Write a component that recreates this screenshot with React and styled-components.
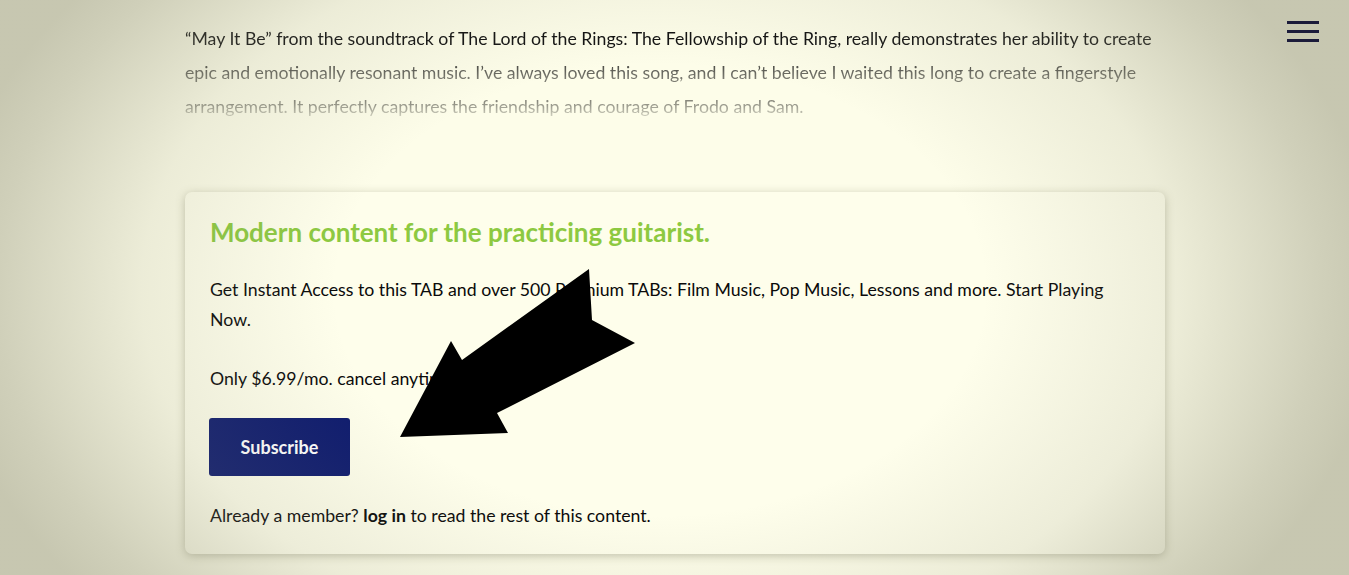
import React from "react";
import styled, { createGlobalStyle } from "styled-components";

const GlobalStyle = createGlobalStyle`
  html, body {
    margin: 0;
    padding: 0;
    background: #fdfde9;
    font-family: Lato, "Open Sans", sans-serif;
    color: #111;
  }
`;

const Page = styled.div`
  position: relative;
  width: 1349px;
  height: 575px;
  overflow: hidden;
  background: #fdfde9;
`;

// photo-style vignette laid over the whole page
const Vignette = styled.div`
  position: absolute;
  inset: 0;
  pointer-events: none;
  background: radial-gradient(
    ellipse 720px 500px at 660px 290px,
    rgba(140, 140, 115, 0) 45%,
    rgba(140, 140, 115, 0.15) 72%,
    rgba(140, 140, 115, 0.4) 92%,
    rgba(140, 140, 115, 0.48) 100%
  );
`;

const Column = styled.main`
  width: 980px;
  margin: 0 auto 0 185px;
  padding-top: 22px;
`;

const Teaser = styled.p`
  margin: 0;
  font-size: 17.7px;
  line-height: 34px;
  background: linear-gradient(
    180deg,
    #0c0c0c 0px,
    #151515 28px,
    #7a7a70 56px,
    #8a8a7e 80px,
    #cdcdbc 94px,
    #d6d6c4 115px
  );
  -webkit-background-clip: text;
  background-clip: text;
  color: transparent;
`;

const Card = styled.section`
  position: relative;
  margin-top: 68px;
  background: #fefeeb;
  border-radius: 7px;
  box-shadow: 0 2px 10px rgba(90, 90, 60, 0.35);
  padding: 25px 25px 23px;
`;

const Heading = styled.h2`
  margin: 0;
  font-size: 26px;
  line-height: 31px;
  font-weight: 700;
  color: #8dc941;
`;

const Text = styled.p`
  margin: ${(p) => p.$top || 0}px 0 0;
  font-size: 17.7px;
  line-height: 30px;
  color: #0a0a0a;
`;

const Button = styled.button`
  display: block;
  margin: 24px 0 0 -1px;
  width: 141px;
  height: 58px;
  border: none;
  border-radius: 3px;
  background: #0e1b6e;
  color: #fff;
  font-family: Lato, sans-serif;
  font-size: 18px;
  font-weight: 700;
  cursor: pointer;
`;

const Strong = styled.b`
  font-weight: 700;
`;

const Arrow = styled.svg`
  position: absolute;
  left: 0;
  top: 0;
  pointer-events: none;
`;

const Menu = styled.button`
  position: absolute;
  top: 21px;
  right: 30px;
  display: flex;
  flex-direction: column;
  gap: 6px;
  padding: 0;
  border: none;
  background: none;
`;

const Bar = styled.span`
  display: block;
  width: 32px;
  height: 3px;
  background: #1b1b3a;
`;

export default function App() {
  return (
    <Page>
      <GlobalStyle />
      <Column>
        <Teaser>
          “May It Be” from the soundtrack of The Lord of the Rings: The Fellowship of the Ring, really
          demonstrates her ability to create epic and emotionally resonant music. I’ve always loved
          this song, and I can’t believe I waited this long to create a fingerstyle arrangement. It
          perfectly captures the friendship and courage of Frodo and Sam.
        </Teaser>
        <Card>
          <Heading>Modern content for the practicing guitarist.</Heading>
          <Text $top={27}>
            Get Instant Access to this TAB and over 500 Premium TABs: Film Music, Pop Music, Lessons
            and more. Start Playing Now.
          </Text>
          <Text $top={29}>Only $6.99/mo. cancel anytime.</Text>
          <Button>Subscribe</Button>
          <Text $top={25}>
            Already a member? <Strong>log in</Strong> to read the rest of this content.
          </Text>
        </Card>
      </Column>
      <Vignette />
      <Arrow width="1349" height="575" viewBox="0 0 1349 575">
        <polygon
          points="400,437 451,341 462,360 589,269 592,320 635,343 497,413 508,433"
          fill="#000"
        />
      </Arrow>
      <Menu aria-label="menu">
        <Bar />
        <Bar />
        <Bar />
      </Menu>
    </Page>
  );
}
